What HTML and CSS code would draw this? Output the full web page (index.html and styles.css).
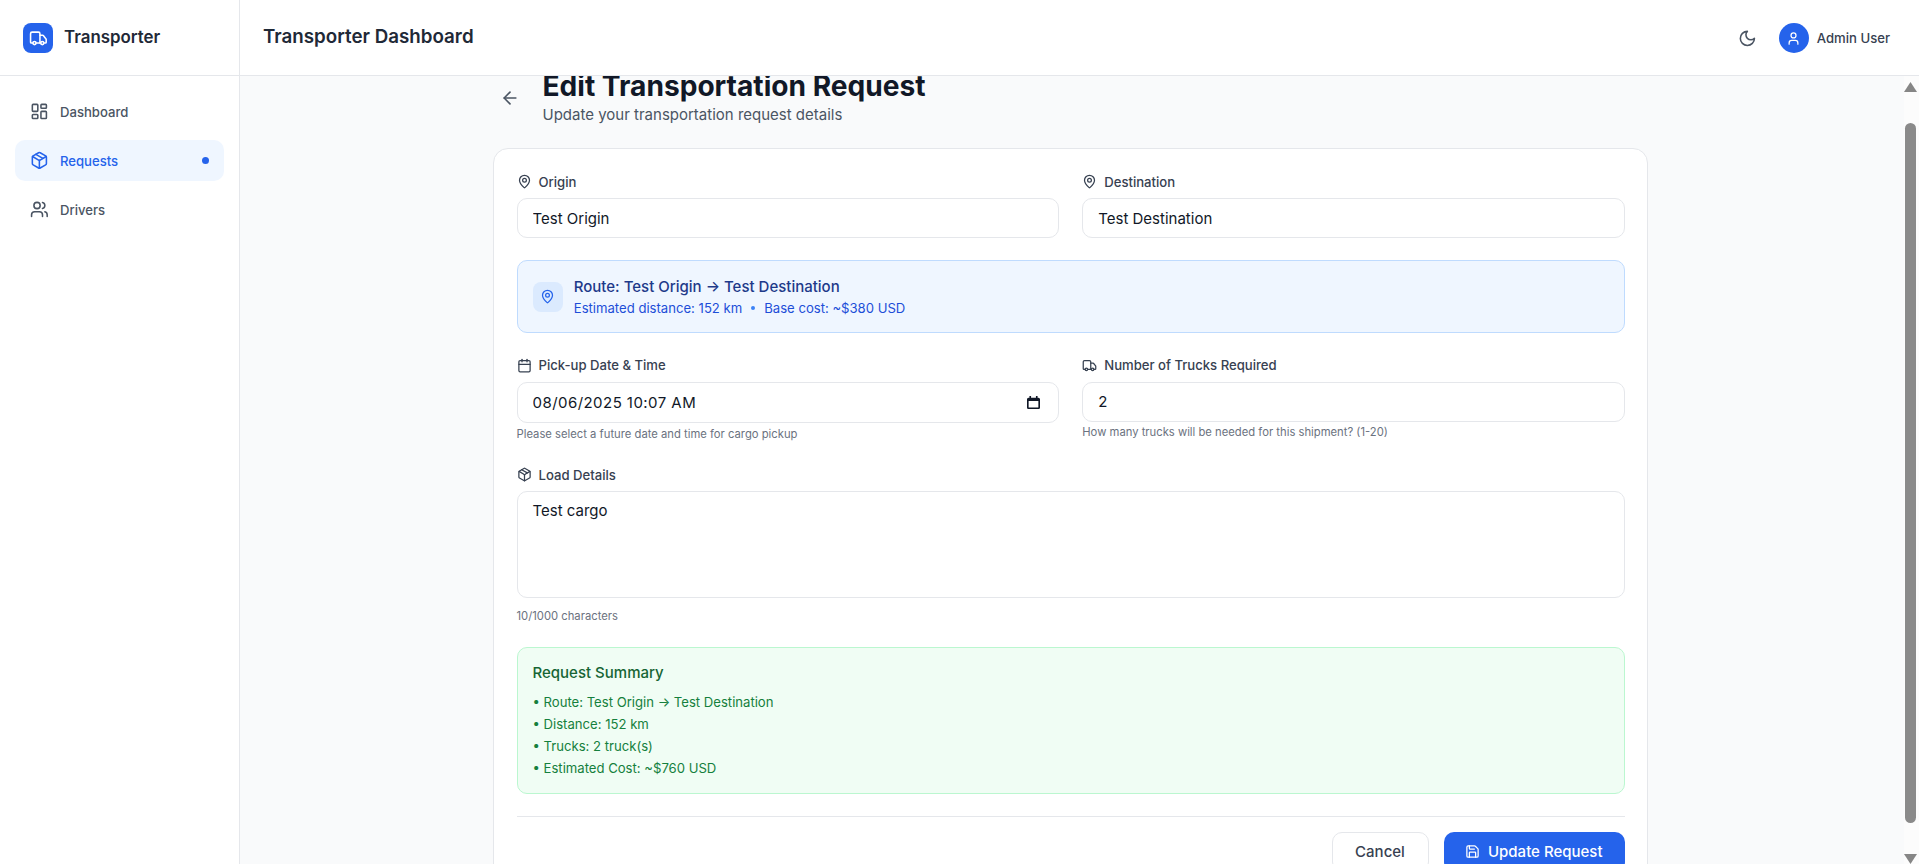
FILE: index.html
```html
<!DOCTYPE html>
<html lang="en-US">
<head>
<meta charset="utf-8">
<title>Transporter Dashboard</title>
<link rel="stylesheet" href="styles.css">
</head>
<body>
<svg class="sprite" aria-hidden="true">
  <symbol id="i-truck" viewBox="0 0 24 24"><path d="M14 18V6a2 2 0 0 0-2-2H4a2 2 0 0 0-2 2v11a1 1 0 0 0 1 1h2"/><path d="M15 18H9"/><path d="M19 18h2a1 1 0 0 0 1-1v-3.65a1 1 0 0 0-.22-.624l-3.48-4.35A1 1 0 0 0 17.52 8H14"/><circle cx="17" cy="18" r="2"/><circle cx="7" cy="18" r="2"/></symbol>
  <symbol id="i-dash" viewBox="0 0 24 24"><rect width="7" height="9" x="3" y="3" rx="1"/><rect width="7" height="5" x="14" y="3" rx="1"/><rect width="7" height="9" x="14" y="12" rx="1"/><rect width="7" height="5" x="3" y="16" rx="1"/></symbol>
  <symbol id="i-package" viewBox="0 0 24 24"><path d="M11 21.73a2 2 0 0 0 2 0l7-4A2 2 0 0 0 21 16V8a2 2 0 0 0-1-1.73l-7-4a2 2 0 0 0-2 0l-7 4A2 2 0 0 0 3 8v8a2 2 0 0 0 1 1.73z"/><path d="M12 22V12"/><path d="m3.3 7 7.703 4.734a2 2 0 0 0 1.994 0L20.7 7"/><path d="m7.5 4.27 9 5.15"/></symbol>
  <symbol id="i-users" viewBox="0 0 24 24"><path d="M16 21v-2a4 4 0 0 0-4-4H6a4 4 0 0 0-4 4v2"/><circle cx="9" cy="7" r="4"/><path d="M22 21v-2a4 4 0 0 0-3-3.87"/><path d="M16 3.13a4 4 0 0 1 0 7.75"/></symbol>
  <symbol id="i-moon" viewBox="0 0 24 24"><path d="M12 3a6 6 0 0 0 9 9 9 9 0 1 1-9-9Z"/></symbol>
  <symbol id="i-user" viewBox="0 0 24 24"><path d="M19 21v-2a4 4 0 0 0-4-4H9a4 4 0 0 0-4 4v2"/><circle cx="12" cy="7" r="4"/></symbol>
  <symbol id="i-back" viewBox="0 0 24 24"><path d="m12 19-7-7 7-7"/><path d="M19 12H5"/></symbol>
  <symbol id="i-pin" viewBox="0 0 24 24"><path d="M20 10c0 4.993-5.539 10.193-7.399 11.799a1 1 0 0 1-1.202 0C9.539 20.193 4 14.993 4 10a8 8 0 0 1 16 0"/><circle cx="12" cy="10" r="3"/></symbol>
  <symbol id="i-cal" viewBox="0 0 24 24"><path d="M8 2v4"/><path d="M16 2v4"/><rect width="18" height="18" x="3" y="4" rx="2"/><path d="M3 10h18"/></symbol>
  <symbol id="i-save" viewBox="0 0 24 24"><path d="M15.2 3a2 2 0 0 1 1.4.6l3.8 3.8a2 2 0 0 1 .6 1.4V19a2 2 0 0 1-2 2H5a2 2 0 0 1-2-2V5a2 2 0 0 1 2-2z"/><path d="M17 21v-7a1 1 0 0 0-1-1H8a1 1 0 0 0-1 1v7"/><path d="M7 3v4a1 1 0 0 0 1 1h7"/></symbol>
</svg>
<div class="app">
  <aside class="sidebar">
    <div class="brand">
      <span class="brand-mark"><svg class="icon icon-19"><use href="#i-truck"/></svg></span>
      <span class="brand-name">Transporter</span>
    </div>
    <nav class="nav">
      <a class="nav-item"><svg class="icon icon-19"><use href="#i-dash"/></svg><span>Dashboard</span></a>
      <a class="nav-item is-active"><svg class="icon icon-19"><use href="#i-package"/></svg><span>Requests</span><i class="nav-dot"></i></a>
      <a class="nav-item"><svg class="icon icon-19"><use href="#i-users"/></svg><span>Drivers</span></a>
    </nav>
  </aside>
  <div class="workspace">
    <header class="topbar">
      <h2 class="topbar-title">Transporter Dashboard</h2>
      <div class="topbar-right">
        <svg class="icon icon-19 moon"><use href="#i-moon"/></svg>
        <div class="account">
          <span class="avatar"><svg class="icon icon-15"><use href="#i-user"/></svg></span>
          <span class="account-name">Admin User</span>
        </div>
      </div>
    </header>
    <div class="viewport">
      <main class="scroller">
        <div class="page">
          <div class="page-head">
            <button class="back" type="button" aria-label="Back"><svg class="icon icon-20"><use href="#i-back"/></svg></button>
            <div>
              <h1 class="page-title">Edit Transportation Request</h1>
              <p class="page-sub">Update your transportation request details</p>
            </div>
          </div>
          <form class="card">
            <div class="two-col">
              <div>
                <label class="label"><svg class="icon icon-15"><use href="#i-pin"/></svg>Origin</label>
                <input class="field" type="text" value="Test Origin">
              </div>
              <div>
                <label class="label"><svg class="icon icon-15"><use href="#i-pin"/></svg>Destination</label>
                <input class="field" type="text" value="Test Destination">
              </div>
            </div>
            <div class="route">
              <span class="route-icon"><svg class="icon icon-15"><use href="#i-pin"/></svg></span>
              <div>
                <p class="route-title">Route: Test Origin → Test Destination</p>
                <p class="route-meta"><span>Estimated distance: 152 km</span><i class="route-dot"></i><span>Base cost: ~$380 USD</span></p>
              </div>
            </div>
            <div class="two-col">
              <div>
                <label class="label"><svg class="icon icon-15"><use href="#i-cal"/></svg>Pick-up Date &amp; Time</label>
                <div class="date-wrap">
                  <input class="field field-date" type="text" value="08/06/2025 10:07 AM">
                  <svg class="date-glyph" viewBox="0 0 16 16"><path d="M14 2h-1V0h-2v2H5V0H3v2H2C.9 2 0 2.9 0 4v10c0 1.1.9 2 2 2h12c1.1 0 2-.9 2-2V4c0-1.1-.9-2-2-2zm0 12H2V6h12v8z"/></svg>
                </div>
                <p class="hint">Please select a future date and time for cargo pickup</p>
              </div>
              <div>
                <label class="label"><svg class="icon icon-15"><use href="#i-truck"/></svg>Number of Trucks Required</label>
                <input class="field field-count" type="number" value="2" min="1" max="20">
                <p class="hint hint-tight">How many trucks will be needed for this shipment? (1-20)</p>
              </div>
            </div>
            <div>
              <label class="label"><svg class="icon icon-15"><use href="#i-package"/></svg>Load Details</label>
              <textarea class="field field-area">Test cargo</textarea>
              <p class="hint">10/1000 characters</p>
            </div>
            <section class="summary">
              <h3 class="summary-title">Request Summary</h3>
              <ul class="summary-list">
                <li>• Route: Test Origin → Test Destination</li>
                <li>• Distance: 152 km</li>
                <li>• Trucks: 2 truck(s)</li>
                <li>• Estimated Cost: ~$760 USD</li>
              </ul>
            </section>
            <div class="actions">
              <button class="btn btn-ghost" type="button">Cancel</button>
              <button class="btn btn-primary" type="button"><svg class="icon icon-15"><use href="#i-save"/></svg>Update Request</button>
            </div>
          </form>
        </div>
      </main>
      <div class="scrollbar" aria-hidden="true">
        <svg class="sb-arrow sb-up" viewBox="0 0 13 10"><path d="M6.5 0L13 10H0z"/></svg>
        <div class="sb-thumb"></div>
        <svg class="sb-arrow sb-down" viewBox="0 0 13 10"><path d="M0 0H13L6.5 10z"/></svg>
      </div>
    </div>
  </div>
</div>
</body>
</html>
```
FILE: styles.css
```css
* { box-sizing: border-box; }
html, body { height: 100%; margin: 0; }
body { font-family: Inter, "Liberation Sans", sans-serif; color: #111827; background: #f9fafb; overflow: hidden; }
h1, h2, h3, p, ul { margin: 0; padding: 0; }
ul { list-style: none; }
.sprite { display: none; }
.icon { fill: none; stroke: currentColor; stroke-width: 2; stroke-linecap: round; stroke-linejoin: round; flex: none; display: block; }
.icon-19 { width: 18.75px; height: 18.75px; }
.icon-20 { width: 20px; height: 20px; }
.icon-15 { width: 15px; height: 15px; }

.app { display: flex; height: 864px; }

.sidebar { width: 240px; flex: none; background: #fff; border-right: 1px solid #e5e7eb; }
.brand { height: 76px; display: flex; align-items: center; gap: 11px; padding: 1px 23px 0; border-bottom: 1px solid #e5e7eb; }
.brand-mark { width: 30px; height: 30px; border-radius: 8px; background: #2563eb; color: #fff; display: flex; align-items: center; justify-content: center; }
.brand-name { font-size: 16.875px; font-weight: 600; color: #1f2937; margin-bottom: 2px; }
.nav { display: flex; flex-direction: column; gap: 8px; padding: 15px; }
.nav-item { height: 41px; display: flex; align-items: center; gap: 11.25px; padding: 0 15px; border-radius: 10px; font-size: 13.125px; font-weight: 500; color: #4b5563; }
.nav-item.is-active { background: #eff6ff; color: #2563eb; }
.nav-dot { width: 7px; height: 7px; border-radius: 50%; background: #2563eb; margin-left: auto; }

.workspace { flex: 1; min-width: 0; display: flex; flex-direction: column; }
.topbar { height: 76px; flex: none; background: #fff; border-bottom: 1px solid #e5e7eb; display: flex; align-items: center; justify-content: space-between; padding: 1px 29px 0 23px; }
.topbar-title { font-size: 18.75px; font-weight: 600; color: #1f2937; margin-bottom: 3px; }
.topbar-right { display: flex; align-items: center; gap: 22px; }
.moon { color: #4b5563; }
.account { display: flex; align-items: center; gap: 8px; }
.avatar { width: 30px; height: 30px; border-radius: 50%; background: #2563eb; color: #fff; display: flex; align-items: center; justify-content: center; }
.account-name { font-size: 13.125px; font-weight: 500; color: #374151; }

.viewport { flex: 1; min-height: 0; display: flex; }
.scroller { flex: 1; min-width: 0; overflow: hidden; padding-right: 3px; background: #f9fafb; }
.scrollbar { width: 15px; flex: none; display: flex; flex-direction: column; background: #fcfcfc; overflow: hidden; }
.sb-arrow { width: 13px; height: 10px; flex: none; display: block; fill: #868686; }
.sb-up { margin-top: 6px; }
.sb-thumb { width: 11px; height: 700px; flex: none; margin: 31px 0 0 1px; border-radius: 6px; background: #8a8a8a; }
.sb-down { margin-top: auto; }

.page { width: 1155px; margin: -6px auto 0; }
.page-head { display: flex; align-items: center; gap: 16.5px; margin-bottom: 22px; }
.back { width: 33px; height: 33px; padding: 0; border: 0; background: none; color: #4b5563; display: flex; align-items: center; justify-content: center; }
.page-title { font-size: 28.125px; line-height: 33.75px; font-weight: 700; color: #111827; }
.page-sub { font-size: 15px; line-height: 22.5px; color: #4b5563; }

.card { background: #fff; border: 1px solid #e5e7eb; border-radius: 15px; padding: 22.5px; display: flex; flex-direction: column; gap: 22.5px; }
.two-col { display: grid; grid-template-columns: 1fr 1fr; gap: 23.5px; }
.label { display: flex; align-items: center; gap: 7px; height: 20px; margin-bottom: 6.5px; font-size: 13.125px; font-weight: 500; color: #374151; }
.field { display: block; width: 100%; height: 39.5px; padding: 0 15px; border: 1px solid #e5e7eb; border-radius: 10px; background: #fff; font-family: Inter, "Liberation Sans", sans-serif; font-size: 15px; color: #111827; }
.date-wrap { position: relative; }
.field-date { height: 41px; letter-spacing: 0.45px; }
.field-count { height: 40px; }
.date-glyph { position: absolute; right: 19px; top: 14px; width: 13px; height: 13px; fill: #111827; }
.field-area { height: 107px; padding-top: 7.5px; padding-bottom: 8px; line-height: 22.5px; resize: none; }
.hint { font-size: 11.25px; line-height: 15px; color: #6b7280; margin-top: 4.5px; }
.hint-tight { margin-top: 3px; }
.field-area + .hint { margin-top: 11px; }

.route { display: flex; align-items: center; gap: 11.25px; padding: 15px; height: 72.5px; background: #eff6ff; border: 1px solid #bfdbfe; border-radius: 10px; }
.route-icon { width: 30px; height: 30px; border-radius: 8px; background: #dbeafe; color: #2563eb; display: flex; align-items: center; justify-content: center; }
.route-title { font-size: 15px; line-height: 22px; font-weight: 500; color: #1e3a8a; }
.route-meta { display: flex; align-items: center; gap: 9px; font-size: 13.125px; line-height: 20px; color: #1d4ed8; }
.route-dot { width: 4px; height: 4px; border-radius: 50%; background: #3b82f6; }

.summary { padding: 15px 15px 13.5px; background: #f0fdf4; border: 1px solid #bbf7d0; border-radius: 10px; }
.summary-title { font-size: 15px; line-height: 20px; font-weight: 500; color: #166534; margin-bottom: 8px; }
.summary-list { font-size: 13.125px; line-height: 22.2px; color: #15803d; }

.actions { display: flex; justify-content: flex-end; gap: 15px; margin-top: -1px; padding-top: 15px; border-top: 1px solid #e5e7eb; }
.btn { height: 40px; display: flex; align-items: center; justify-content: center; gap: 7.5px; border-radius: 10px; font-family: Inter, "Liberation Sans", sans-serif; font-size: 15px; font-weight: 500; }
.btn-ghost { width: 97px; background: #fff; border: 1px solid #e5e7eb; color: #374151; }
.btn-primary { width: 181px; background: #2563eb; border: 0; color: #fff; }
```
